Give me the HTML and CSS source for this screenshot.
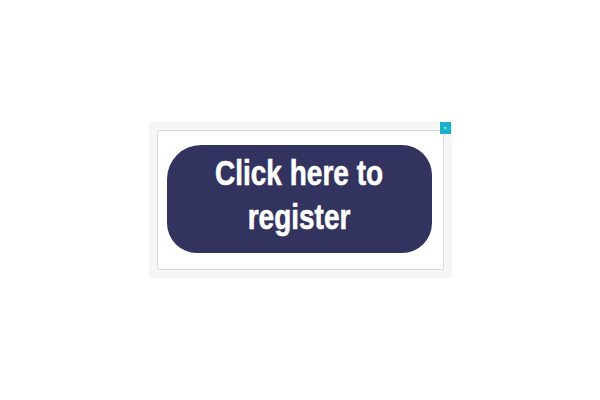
FILE: index.html
```html
<!DOCTYPE html>
<html>
<head>
<meta charset="utf-8">
<link rel="stylesheet" href="styles.css">
</head>
<body>
<div class="stage">
  <div class="popup">
    <div class="frame">
      <a class="register" href="#"><span class="label">Click here to<br>register</span></a>
    </div>
    <button class="close" aria-label="Close">×</button>
  </div>
</div>
</body>
</html>
```
FILE: styles.css
```css
html, body {
  margin: 0;
  padding: 0;
  background: #ffffff;
}
.stage {
  width: 600px;
  height: 400px;
  display: flex;
  align-items: center;
  justify-content: center;
}
.popup {
  position: relative;
  width: 303px;
  height: 156px;
  box-sizing: border-box;
  padding: 8px;
  background: #f6f6f6;
}
.frame {
  box-sizing: border-box;
  width: 287px;
  height: 140px;
  background: #ffffff;
  border: 1px solid #dadada;
  border-radius: 2px;
  padding: 14px 11px 16px 9px;
}
.register {
  display: flex;
  align-items: center;
  justify-content: center;
  width: 265px;
  height: 108px;
  background: #33335f;
  border-radius: 34px 30px 30px 30px;
  text-decoration: none;
}
.label {
  display: block;
  color: #ffffff;
  font-family: "Liberation Sans", sans-serif;
  font-weight: bold;
  font-size: 35px;
  line-height: 44px;
  text-align: center;
  white-space: nowrap;
  -webkit-text-stroke: 0.6px #ffffff;
  transform: translateY(-4px) scaleX(0.8);
}
.close {
  position: absolute;
  top: 0;
  right: 1px;
  width: 11px;
  height: 12px;
  padding: 0;
  border: 0;
  background: #17b2c9;
  color: #cfeff4;
  font-family: "DejaVu Sans", sans-serif;
  font-size: 6px;
  line-height: 12px;
  text-align: center;
}
```
